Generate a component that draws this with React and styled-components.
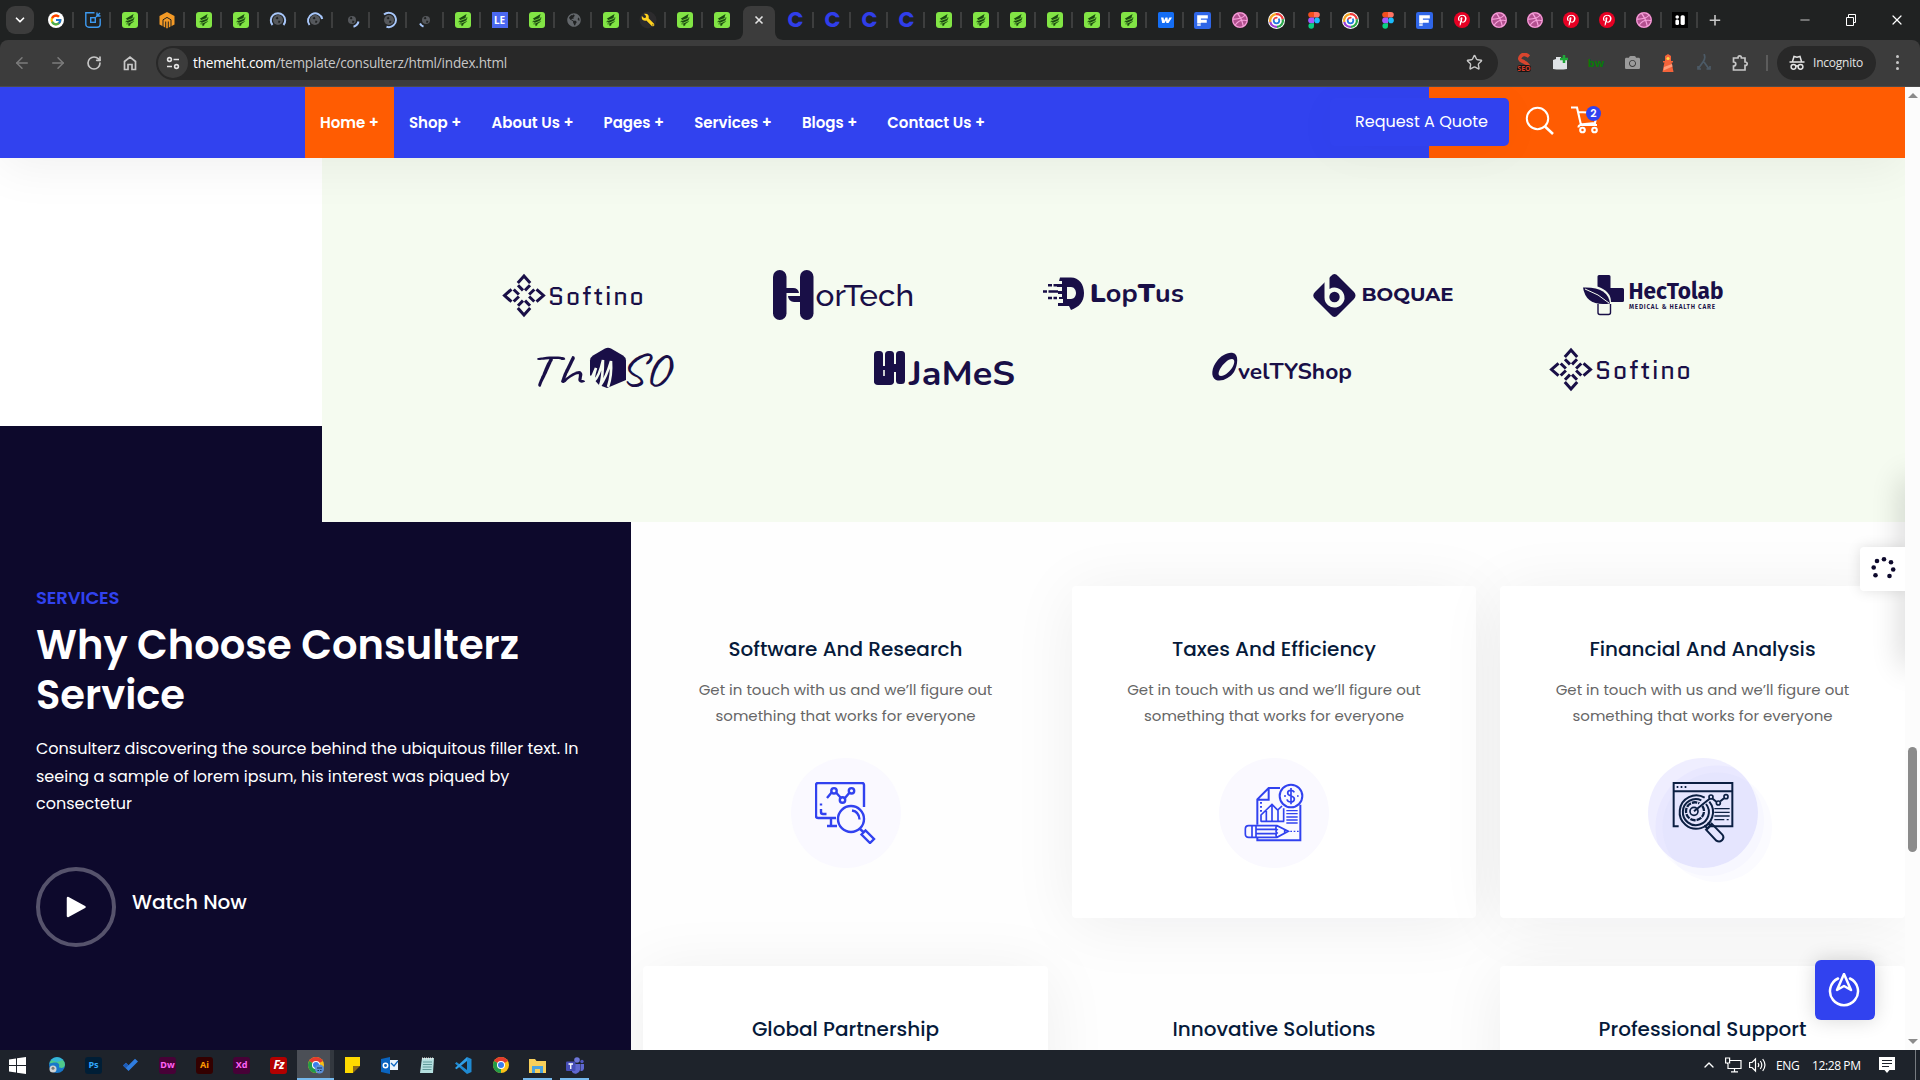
import React from "react";
import styled, { createGlobalStyle, css } from "styled-components";
import { ArrowLeft, ArrowRight, ChevronDown, ChevronUp, Minus, RotateCw, Star, X } from "lucide-react";
import { FcGoogle } from "react-icons/fc";
import { FaDribbble, FaPinterestP, FaGlobeAmericas, FaWrench, FaCamera } from "react-icons/fa";

const BLUE = "#3142ef";
const ORANGE = "#ff5c02";
const NAVY = "#0d092c";
const LOGO = "#190f47";

const Global = createGlobalStyle`
  *, *::before, *::after { box-sizing: border-box; }
  body { margin: 0; overflow: hidden; background: #fff; }
  svg { display: block; flex: none; }
`;

const uiFont = css`font-family: "Open Sans", "Noto Sans", sans-serif;`;
const siteFont = css`
  font-family: Poppins, Inter, "Open Sans", sans-serif;
`;

/* ---------- shell ---------- */
const Screen = styled.div`
  width: 1920px;
  height: 1080px;
  display: flex;
  flex-direction: column;
  overflow: hidden;
`;

/* ---------- tab strip ---------- */
const TabStrip = styled.div`
  height: 40px;
  display: flex;
  align-items: center;
  background: #202222;
  padding-left: 6px;
  flex: none;
`;
const TabSearch = styled.div`
  width: 28px;
  height: 28px;
  border-radius: 9px;
  background: #3c3c3c;
  display: grid;
  place-items: center;
  margin-right: 3px;
`;
const Tab = styled.div`
  width: ${(p) => p.$w}px;
  height: 16px;
  display: flex;
  align-items: center;
  justify-content: center;
  border-right: 2px solid ${(p) => (p.$bare ? "transparent" : "#3d3e3e")};
  padding-left: 2px;
  flex: none;
`;
const ActiveTab = styled.div`
  width: 37px;
  height: 40px;
  flex: none;
  svg { margin-left: -5px; }
`;
const WindowButtons = styled.div`
  margin-left: auto;
  display: flex;
  align-items: center;
  gap: 29.5px;
  padding-right: 15px;
`;
const Letter = styled.span`
  ${siteFont}
  font-weight: 700;
  font-size: 21px;
  line-height: 16px;
  color: #303eea;
`;
const TileText = styled.span`
  width: 16px;
  height: 16px;
  background: #4b68f0;
  color: #fff;
  font: 700 10px/16px "Noto Sans", sans-serif;
  text-align: center;
`;

/* ---------- toolbar ---------- */
const ToolbarBack = styled.div`
  background: #202222;
  flex: none;
`;
const Toolbar = styled.div`
  height: 47px;
  display: flex;
  align-items: center;
  background: #3c3c3c;
  border-radius: 8px 8px 0 0;
  padding: 0 15px 1px 13px;
  border-bottom: 1px solid #4b4b4b;
  color: #c7c7c7;
`;
const NavButtons = styled.div`
  display: flex;
  gap: 18px;
  width: 143px;
`;
const Omnibox = styled.div`
  width: 1342px;
  height: 34px;
  border-radius: 17px;
  background: #282828;
  display: flex;
  align-items: center;
  padding: 0 15px 0 2px;
  color: #c7c7c7;
`;
const SiteInfo = styled.div`
  width: 30px;
  height: 30px;
  border-radius: 50%;
  background: #3c3c3c;
  display: grid;
  place-items: center;
  margin-right: 5px;
`;
const Url = styled.div`
  ${uiFont}
  flex: 1;
  font-size: 13.6px;
  letter-spacing: -0.22px;
  b {
    font-weight: 400;
    color: #fff;
  }
`;
const Extensions = styled.div`
  display: flex;
  align-items: center;
  gap: 18px;
  padding-left: 17px;
`;
const ExtSlot = styled.div`
  width: 18px;
  height: 20px;
  display: grid;
  place-items: center;
`;
const ExtWord = styled.span`
  font: 700 11px/16px "Open Sans", sans-serif;
  color: #087a08;
`;
const Divider = styled.div`
  width: 2px;
  height: 16px;
  background: #5c5c5c;
  margin: 0 9px 0 17px;
`;
const Incognito = styled.div`
  width: 99px;
  height: 34px;
  border-radius: 17px;
  background: #282828;
  display: flex;
  align-items: center;
  gap: 8px;
  padding-left: 12px;
  ${uiFont}
  font-size: 12px;
  letter-spacing: -0.22px;
  color: #e3e3e3;
`;
const Dots = styled.div`
  display: grid;
  gap: 3px;
  margin-left: auto;
  margin-right: 6px;
  i {
    width: 3px;
    height: 3px;
    border-radius: 50%;
    background: #c7c7c7;
  }
`;

/* ---------- web page ---------- */
const Viewport = styled.div`
  height: 963px;
  display: flex;
  flex: none;
`;
const Page = styled.div`
  width: 1905px;
  height: 963px;
  overflow: hidden;
  position: relative;
  background: #fefefe;
  ${siteFont}
`;
const Scrollbar = styled.div`
  width: 15px;
  background: #fcfcfc;
  display: flex;
  flex-direction: column;
  align-items: center;
  padding: 6px 0 6px;
`;
const Arrow = styled.i`
  border: 5px solid transparent;
  border-top-width: ${(p) => (p.$up ? 0 : 5)}px;
  border-bottom-width: ${(p) => (p.$up ? 5 : 0)}px;
  border-${(p) => (p.$up ? "bottom" : "top")}-color: #8b8b8b;
`;
const Thumb = styled.div`
  width: 9px;
  height: 105px;
  border-radius: 5px;
  background: #8b8b8b;
  margin: 649px 0 auto;
`;

const SiteNav = styled.nav`
  height: 71px;
  display: flex;
  background: linear-gradient(90deg, ${BLUE} 1429px, ${ORANGE} 1429px);
  box-shadow: 0 10px 50px rgba(0, 0, 0, 0.06);
  padding-left: 305px;
  position: relative;
  z-index: 2;
`;
const NavItem = styled.div`
  padding: 0 15px;
  line-height: 71px;
  font-size: 15px;
  font-weight: 600;
  white-space: nowrap;
  color: #fff;
  background: ${(p) => (p.$active ? ORANGE : "transparent")};
`;
const NavTools = styled.div`
  width: 279px;
  margin-left: auto;
  margin-right: 296px;
  display: flex;
  align-items: flex-start;
  padding-top: 11px;
`;
const QuoteButton = styled.div`
  width: 179px;
  height: 48px;
  border-radius: 5px;
  background: ${BLUE};
  box-shadow: 0 5px 50px rgba(0, 0, 0, 0.03);
  color: #fff;
  font-size: 16px;
  line-height: 47px;
  padding-left: 25px;
  white-space: nowrap;
`;
const SearchSlot = styled.div`
  padding: 8px 0 0 16px;
`;
const CartSlot = styled.div`
  padding: 7px 0 0 15px;
  position: relative;
`;
const CartCount = styled.div`
  position: absolute;
  top: 8px;
  left: 31px;
  width: 15px;
  height: 15px;
  border-radius: 50%;
  background: ${BLUE};
  color: #fff;
  font-size: 11px;
  font-weight: 600;
  line-height: 15px;
  text-align: center;
`;

const ClientsBand = styled.section`
  height: 364px;
  padding-left: 322px;
  background: linear-gradient(#fff 268px, ${NAVY} 268px);
`;
const ClientsPanel = styled.div`
  height: 364px;
  background: #f5fbf0;
  padding: 100px 116px 0;
`;
const LogoRow = styled.div`
  height: 74px;
  display: flex;
`;
const LogoCell = styled.div`
  flex: 1;
  display: grid;
  place-items: center;
`;

const Services = styled.section`
  display: flex;
  height: 528px;
`;
const Intro = styled.div`
  width: 631px;
  background: ${NAVY};
  color: #fff;
  padding: 62px 36px 0;
  position: relative;
  z-index: 1;
`;
const Eyebrow = styled.div`
  color: ${BLUE};
  font-size: 18px;
  font-weight: 600;
  line-height: 27px;
  letter-spacing: -0.1px;
`;
const Heading = styled.h2`
  margin: 9px 0 15px;
  font-size: 40px;
  font-weight: 600;
  line-height: 50px;
`;
const Lead = styled.p`
  margin: 0;
  font-size: 16px;
  line-height: 27.5px;
`;
const Watch = styled.div`
  margin-top: 49px;
  display: flex;
  align-items: center;
  gap: 16px;
`;
const PlayRing = styled.div`
  width: 80px;
  height: 80px;
  border-radius: 50%;
  border: 4px solid #56536c;
  display: grid;
  place-items: center;
`;
const WatchLabel = styled.div`
  font-size: 20px;
  font-weight: 500;
  line-height: 24px;
  padding-bottom: 9px;
`;

const Cards = styled.div`
  flex: 1;
  padding: 64px 0 0 12px;
  display: grid;
  grid-template-columns: 405px 404px 405px;
  grid-template-rows: 332px 332px;
  gap: 48px 24px;
`;
const Card = styled.article`
  border-radius: 4px;
  display: flex;
  flex-direction: column;
  align-items: center;
  padding: 51px 45px 0;
  position: relative;
  ${(p) => p.$raised && css`
    background: #fff;
    box-shadow: 0 6px 66px rgba(10, 10, 30, 0.065);
  `}
`;
const CardTitle = styled.h3`
  margin: 0 0 16px;
  font-size: 20px;
  font-weight: 500;
  line-height: 24px;
  color: #061a3a;
  white-space: nowrap;
`;
const CardText = styled.p`
  margin: 0;
  font-size: 15px;
  line-height: 26px;
  color: #666;
  text-align: center;
`;
const Disc = styled.div`
  width: 110px;
  height: 110px;
  border-radius: 50%;
  background: #faf9ff;
  margin-top: 29px;
  display: grid;
  place-items: center;
  ${(p) => p.$hot && css`
    background: radial-gradient(circle at 69px 69px, #e5e5fe 54px, #e9e8ff 55px, #e9e8ff 61px, #efeeff 62px);
    box-shadow: 6px 8px 0 0 rgba(79, 75, 255, 0.025), 14px 14px 0 0 rgba(79, 75, 255, 0.025);
  `}
`;

const Loader = styled.div`
  position: absolute;
  right: 0;
  top: 460px;
  width: 45px;
  height: 44px;
  background: #fff;
  border-radius: 4px 0 0 4px;
  box-shadow: 0 0 14px rgba(0, 0, 0, 0.12);
  display: grid;
  place-items: center;
  z-index: 3;
`;
const DrawerEdge = styled.div`
  position: absolute;
  left: 1905px;
  top: 395px;
  width: 20px;
  height: 180px;
  box-shadow: 0 0 30px 4px rgba(0, 0, 0, 0.16);
  z-index: 2;
`;
const ToTop = styled.div`
  position: absolute;
  left: 1815px;
  top: 873px;
  width: 60px;
  height: 60px;
  border-radius: 6px;
  background: ${BLUE};
  box-shadow: 0 0 20px rgba(0, 0, 0, 0.16);
  display: grid;
  place-items: center;
  z-index: 3;
`;

/* ---------- taskbar ---------- */
const Taskbar = styled.div`
  height: 30px;
  background: #1e232b;
  display: flex;
  flex: none;
`;
const Task = styled.div`
  width: 37px;
  height: 30px;
  display: grid;
  place-items: center;
  ${(p) => p.$open && css`
    background: linear-gradient(#76b9ed, #76b9ed) bottom / 29px 2px no-repeat;
  `}
  ${(p) => p.$on && css`
    background: linear-gradient(90deg, #4b4f56 33px, #33383f 33px);
    box-shadow: inset 0 -2px 0 #76b9ed;
  `}
  &:first-child {
    width: 38px;
    padding-right: 3px;
  }
`;
const AppTile = styled.span`
  width: 17px;
  height: 17px;
  border-radius: 3px;
  background: ${(p) => p.$bg};
  color: ${(p) => p.$fg};
  font: ${(p) => (p.$italic ? "italic 700 12px" : "700 9px")}/16px "Noto Sans", sans-serif;
  letter-spacing: ${(p) => (p.$italic ? -1 : 0)}px;
  text-align: center;
`;
const Tray = styled.div`
  margin-left: auto;
  display: flex;
  align-items: center;
  color: #fff;
  ${uiFont}
  font-size: 12px;
  letter-spacing: -0.4px;
`;
const TrayItem = styled.div`
  margin-left: ${(p) => p.$gap}px;
  width: ${(p) => (p.$w ? `${p.$w}px` : "auto")};
  white-space: nowrap;
`;
const DesktopEdge = styled.div`
  width: 5px;
  height: 30px;
  border-left: 1px solid #777b80;
  margin-left: 20px;
`;

/* ---------- favicons ---------- */
const Green = () => (
  <svg width="16" height="16" viewBox="0 0 16 16">
    <rect width="16" height="16" rx="3" fill="#82e545" />
    <path d="M11.600 2L10.400 5.700l2.200-.3L11 9.200l1.300.1-4.500 3.100 1.200.4L6.600 14.200l-.3-2-2.200.1L5.800 10l-2.500.3L5 7.300l-1.300-.5z" fill="#1b4a10" />
    <path d="M4 8.900l7.500-2.700M5.300 11.500l6.200-2.700" stroke="#82e545" strokeWidth=".8" />
  </svg>
);
const Frame = () => (
  <svg width="16" height="16" viewBox="0 0 16 16" fill="none" stroke="#3d9af0" strokeWidth="1.400">
    <path d="M9.500 .8H.8v11.400a3 3 0 0 0 3 3h8.400a3 3 0 0 0 3-3V6.500" /><rect x="5.700" y="5.700" width="4.600" height="4.600" /><path d="M12 .5v3.500h3.500M11 5l4-4" />
  </svg>
);
const Hive = () => (
  <svg width="16" height="17" viewBox="0 0 16 17">
    <path d="M8 0l7.500 4v8.500L8 16.500.5 12.500V4z" fill="#f49a26" />
    <path d="M4 16V7.800L8 5.400l4 2.400V16M6.700 17V9.500M9.300 17V9.500" fill="none" stroke="#202222" strokeWidth="1" />
  </svg>
);
const Globe = ({ size = 13 }) => <FaGlobeAmericas size={size} color="#63676b" />;
const LoadingTab = ({ d, s = 10 }) => (
  <svg width="18" height="18" viewBox="0 0 18 18">
    <circle cx="9" cy="9" r={s / 2} fill="#55585c" />
    <path d="M6.500 7l2-1.200 1 1.700-1.500 1zM9.500 9.500l2 .5-1 2-1.500-.5z" fill="#202222" />
    <path d={d} fill="none" stroke="#a8c7fa" strokeWidth="2" />
  </svg>
);
const Wrench = () => (
  <svg width="18" height="18" viewBox="0 0 18 18">
    <circle cx="9" cy="9" r="8.500" fill="#2c2b2d" />
    <g transform="translate(15.500 2.500) scale(-1 1)"><FaWrench size={13} color="#ffd21e" /></g>
  </svg>
);
const Webflow = () => (
  <svg width="16" height="16" viewBox="0 0 16 16"><rect width="16" height="16" rx="1.500" fill="#146ef5" /><path d="M3 5.500h2.500l.6 3 1.400-3h2l.4 3 1.400-3H14L10.500 11H8.300L8 8.500 6.500 11H4.200z" fill="#fff" /></svg>
);
const BlueF = () => (
  <svg width="17" height="17" viewBox="0 0 16 16"><rect width="16" height="16" rx="2" fill="#2f66e8" /><path d="M3 3h10v3H6.500v1.200H12V10H6.500v.8H3zM3 11.600h3.300V13H3z" fill="#fff" /></svg>
);
const DribbbleIcon = () => (
  <svg width="16" height="16" viewBox="0 0 16 16"><circle cx="8" cy="8" r="8" fill="#b2508f" /><FaDribbble size={16} color="#f6a1da" /></svg>
);
const Rings = () => (
  <svg width="17" height="17" viewBox="0 0 17 17" fill="none">
    <circle cx="8.500" cy="8.500" r="8.500" fill="#fff" />
    <g strokeWidth="2.300">
      <path d="M2.300 10A6.400 6.400 0 0 1 8 2.200" stroke="#f5a623" /><path d="M8 2.200a6.400 6.400 0 0 1 6.800 5" stroke="#ef3b3b" /><path d="M14.800 7.200A6.400 6.400 0 0 1 9 14.900" stroke="#2aa84a" /><path d="M9 14.900A6.400 6.400 0 0 1 2.300 10" stroke="#9b3fd8" />
      <circle cx="8.500" cy="8.500" r="2.800" stroke="#2277dd" strokeWidth="1.800" strokeDasharray="10 5" /><path d="M5.900 7.500a2.800 2.800 0 0 1 3.500-1.700" stroke="#ef3b3b" strokeWidth="1.800" />
    </g>
  </svg>
);
const Figma = () => (
  <svg width="12" height="17" viewBox="0 0 12 17">
    <path d="M6 0H3a2.800 2.800 0 0 0 0 5.600h3z" fill="#f24e1e" /><path d="M6 0h3a2.800 2.800 0 0 1 0 5.600H6z" fill="#ff7262" />
    <path d="M6 5.600H3a2.800 2.800 0 0 0 0 5.600h3z" fill="#a259ff" /><circle cx="9" cy="8.400" r="2.800" fill="#1abcfe" />
    <path d="M3 11.200h3V14a2.800 2.800 0 1 1-3-2.800z" fill="#0acf83" />
  </svg>
);
const Pin = () => (
  <svg width="16" height="16" viewBox="0 0 16 16"><circle cx="8" cy="8" r="8" fill="#e60023" /><g transform="translate(2.500 2.500)"><FaPinterestP size={11.500} color="#fff" /></g></svg>
);
const BlackTile = () => (
  <svg width="16" height="16" viewBox="0 0 16 16"><rect width="16" height="16" fill="#000" /><g fill="#fff"><circle cx="5.200" cy="5" r="1.800" /><rect x="3.400" y="7.600" width="3.600" height="5.400" rx="1.500" /><rect x="8.600" y="3.200" width="4.200" height="9.800" rx="1.600" /></g></svg>
);
const GoogleIcon = () => (
  <svg width="16" height="16" viewBox="0 0 16 16"><circle cx="8" cy="8" r="8" fill="#fff" /><g transform="translate(1.500 1.500)"><FcGoogle size={13} /></g></svg>
);
const C = () => <Letter>C</Letter>;
const LE = () => <TileText>LE</TileText>;

const arcs = [
  "M3.500 14a7.200 7.200 0 1 1 11 0",
  "M3.500 14A7.200 7.200 0 1 1 16.200 8",
  "M15.500 10.500a7 7 0 0 1-5 5.200",
  "M4 3.500a7.200 7.200 0 1 1 2.500 12.300",
  "M3 12.500a7 7 0 0 0 3.500 3.200",
];
const tabs = [
  [GoogleIcon], [Frame], [Green], [Hive], [Green], [Green],
  [LoadingTab, { d: arcs[0] }], [LoadingTab, { d: arcs[1] }], [LoadingTab, { d: arcs[2], s: 8 }],
  [LoadingTab, { d: arcs[3] }], [LoadingTab, { d: arcs[4], s: 8 }],
  [Green], [LE], [Green], [Globe, { size: 14 }], [Green], [Wrench], [Green], [Green],
  null,
  [C], [C], [C], [C], [Green], [Green], [Green], [Green], [Green], [Green],
  [Webflow], [BlueF], [DribbbleIcon], [Rings], [Figma], [Rings], [Figma], [BlueF], [Pin],
  [DribbbleIcon], [DribbbleIcon], [Pin], [Pin], [DribbbleIcon], [BlackTile],
];

/* ---------- client logos ---------- */
const LogoText = styled.text`
  fill: ${LOGO};
  font-family: ${(p) => p.$font || "Inter"}, "Open Sans", sans-serif;
  font-size: ${(p) => p.$size}px;
  font-weight: ${(p) => p.$weight || 400};
`;
const LogoSvg = ({ children }) => (
  <svg width="141" height="50" viewBox="0 0 141 50" overflow="visible" fill={LOGO}>{children}</svg>
);
const Softino = () => (
  <LogoSvg>
    {[0, 90, 180, 270].map((a) => (
      <g key={a} transform={`rotate(${a} 21 25.500)`} fill="none" stroke={LOGO} strokeWidth="3">
        <path d="M14.800 13 21 6l6.200 7M15 15.200l5 5.200M27 15.200l-5 5.200" />
      </g>
    ))}
    <LogoText $font="Quantico" $size={25} x="45" y="35" textLength="96">Softino</LogoText>
  </LogoSvg>
);
const HorTech = () => (
  <LogoSvg>
    <rect width="13.500" height="50" rx="6.700" /><rect x="27" width="13.500" height="50" rx="6.700" />
    <path d="M13 18h7a6 6 0 0 1 6 5H13zM28 32h-7a6 6 0 0 1-6-6h13z" />
    <LogoText $font="Raleway" $size={30.500} $weight={500} x="42.500" y="36" textLength="98.500" lengthAdjust="spacingAndGlyphs">orTech</LogoText>
  </LogoSvg>
);
const LopTus = () => (
  <LogoSvg>
    <path fillRule="evenodd" d="M17 7.500h11c8 0 13 7 13 15.500 0 9-5 14-13 17l-2-4H15v-3h5v-4h-4v-2h3v-3h-4v-3h4v-4h-5v-3h5v-3h-3zM24 17v12h4c3 0 5-3 5-6s-2-6-5-6z" />
    <path d="M0 21.500h15M5 15.300h9M5 28h9" stroke={LOGO} strokeWidth="2.400" strokeDasharray="4 1.500 12" />
    <LogoText $font="Nunito" $size={25} $weight={700} x="47" y="31.500" textLength="94" lengthAdjust="spacingAndGlyphs"><tspan fontWeight="900">L</tspan>op<tspan fontWeight="900">T</tspan>us</LogoText>
  </LogoSvg>
);
const Boquae = () => (
  <LogoSvg>
    <path d="M18 6q3.500-4 7 0l16 16q3 3.500 0 7L25 45q-3.500 4-7 0L2 29q-3.500-3.500 0-7z" />
    <path d="M11.500 8v19.500a10 10 0 1 0 5-8.600V4z" fill="#f5fbf0" /><circle cx="21.500" cy="27" r="5.200" />
    <LogoText $font="Montserrat" $size={18.500} $weight={700} x="48.500" y="31" textLength="92" lengthAdjust="spacingAndGlyphs">BOQUAE</LogoText>
  </LogoSvg>
);
const HecTolab = () => (
  <LogoSvg>
    <path d="M16 5h10q1.500 0 1.500 1.500V18h12q1.500 0 1.500 1.500v11q0 1.500-1.500 1.500H28q0-11-13.500-15.500v-10Q14.500 5 16 5z" />
    <path d="M0 17.500q25-1 27 16Q3 37 0 17.500z" /><path d="M2 19q14 5 24 14" stroke="#f5fbf0" fill="none" />
    <path d="M15 34v8.500q0 2 2 2h8.500q2 0 2-2V34" fill="none" stroke={LOGO} strokeWidth="1.400" />
    <LogoText $font="'Fira Sans', 'Noto Sans'" $size={24} $weight={700} x="45.500" y="28.500" textLength="95" lengthAdjust="spacingAndGlyphs">HecTolab</LogoText>
    <LogoText $font="'Fira Sans', 'Noto Sans'" $size={6.400} $weight={600} x="46" y="39" textLength="86">MEDICAL &amp; HEALTH CARE</LogoText>
  </LogoSvg>
);
const Thmso = () => (
  <LogoSvg>
    <path d="M69 4.500q3-1.500 6 0l12 7q3 2 3 5V36l-19 8-8-3-9-10V16.500q0-3 3-5z" />
    <LogoText $font="Caveat" $size={46} $weight={400} x="-9" y="41" textLength="56" lengthAdjust="spacingAndGlyphs">Th</LogoText>
    <path d="M48 41q6-1 12-17-3 10-2 13 5-4 9-21 0 18-3 26M64 42Q70 34 75 17q1 14-3 26" fill="none" stroke="#f5fbf0" strokeWidth="2.600" />
    <LogoText $font="Caveat" $size={46} $weight={400} x="84" y="41" textLength="49" lengthAdjust="spacingAndGlyphs">SO</LogoText>
  </LogoSvg>
);
const James = () => (
  <LogoSvg>
    <rect y="7" width="9" height="33" rx="3.500" /><rect x="11" y="7" width="9" height="33" rx="3.500" /><rect x="22" y="7" width="9" height="33" rx="3.500" />
    <rect y="22" width="20" height="19" rx="4" /><rect x="14" y="20" width="14" height="8" />
    <path d="M10 26v6M10 9v9M21 9v8M21 31v8" stroke="#f5fbf0" strokeWidth="1.600" />
    <LogoText $font="Nunito" $size={33} $weight={700} x="35" y="40.500" textLength="106" lengthAdjust="spacingAndGlyphs">JaMeS</LogoText>
  </LogoSvg>
);
const Oveltyshop = () => (
  <LogoSvg>
    <path fillRule="evenodd" d="M21 9c6 1 5 12 1 19-4 6-12 10-18 8-6-3-4-13 1-19C9 12 15 8 21 9zM20 15c-4 0-9 5-12 10-2 4-2 7 1 7 4 0 8-4 11-8 3-5 3-9 0-9z" />
    <LogoText $font="Nunito" $size={22} $weight={700} x="26" y="35" textLength="114" lengthAdjust="spacingAndGlyphs">velTYShop</LogoText>
  </LogoSvg>
);

/* ---------- service icons ---------- */
const MonitorSearch = () => (
  <svg width="62" height="62" viewBox="1 1 62 62" fill="none" stroke={BLUE} strokeWidth="2.400">
    <path d="M50 26V4q0-2-2-2H4Q2 2 2 4v31q0 2 2 2h18M17 37.500v7M13 45h10" />
    <path d="M7 22.500v2M7 28v3q0 2 2 2h3.500M13 17l5-6M22 11.500l5 5.500M31 17l5-6" />
    <circle cx="20" cy="9.800" r="2.700" /><circle cx="28.500" cy="19" r="2.700" /><circle cx="37.500" cy="9.800" r="2.700" />
    <circle cx="37" cy="38" r="13" /><path d="M38 29.500q7 1 7.500 9M46 48l4 3.500M47.500 53.500l4-4L60 58l-4 4z" />
  </svg>
);
const ReportPencil = () => (
  <svg width="80" height="72" viewBox="-6 3 240 216" fill="none" stroke={BLUE} strokeWidth="6">
    <path d="M64 146V70l34-34h34M64 71h34V37M193 86v107H64v-8" />
    <circle cx="165" cy="60" r="34" /><path d="M175 49q-3-7-11-6-9 1-9 8 0 6 10 9 11 3 10 10-1 8-11 8-9 0-11-8M165 36v49M144 60h6M183 60h5" strokeWidth="5" />
    <path d="M75 78v32" strokeDasharray="5 7" /><path d="M75 137v-20l33-32 17 17 13-12M75 136h70M91 135v-30M108 135V87M126 135v-32M143 135V97" strokeWidth="5" />
    <path d="M151 104h34M151 113h34M151 123h34M151 132h34M151 141h34" strokeWidth="4" />
    <path d="M38 149h85l34 17-34 18H38q-10 0-10-10v-15q0-10 10-10zM48 149v35M60 149v35M60 160h60M60 173h60M123 149q-7 8 0 12-6 5 0 10-6 5 0 13M146 161v10" strokeWidth="5" />
    <path d="M163 166h25" strokeDasharray="5 5" strokeWidth="4" />
  </svg>
);
const BrowserTarget = () => (
  <svg width="84" height="78" viewBox="3 12 252 234" fill="none" stroke="#0b1f42" strokeWidth="6">
    <path d="M56 169H41V39h176v130h-66M41 64h176" /><path d="M50 51h30" strokeDasharray="5 7" />
    <path d="M148 95a50 50 0 1 1-14-12" /><path d="M138 102a39 39 0 1 1-14-11" /><path d="M127 108a27 27 0 1 1-9-8" strokeWidth="7" strokeDasharray="16 3" /><circle cx="102" cy="124" r="12" strokeWidth="5" />
    <path d="M102 124l47-38M158 86l11 9M181 94l11-9" /><circle cx="153" cy="81" r="6" strokeWidth="5" /><circle cx="175" cy="99" r="6" strokeWidth="5" /><circle cx="198" cy="80" r="6" strokeWidth="5" />
    <path d="M163 116h46M163 127h46M163 138h46M163 149h30M200 149h6" strokeWidth="4" />
    <path d="M133 166l10 10 9-9-9-9M138 179l31 33q9 6 17-1 8-9 1-17l-32-33z" />
  </svg>
);

const nav = ["Home +", "Shop +", "About Us +", "Pages +", "Services +", "Blogs +", "Contact Us +"];
const blurb = "Get in touch with us and we’ll figure out something that works for everyone";
const cards = [
  { title: "Software And Research", Icon: MonitorSearch },
  { title: "Taxes And Efficiency", Icon: ReportPencil, raised: true },
  { title: "Financial And Analysis", Icon: BrowserTarget, raised: true, hot: true },
  { title: "Global Partnership", raised: true },
  { title: "Innovative Solutions" },
  { title: "Professional Support", raised: true },
];
const loaderDots = [[14, 3.200], [21, 6.200], [23.200, 13.500], [19.500, 20], [7, 5], [3.700, 11.500], [5.500, 19.200]];

/* ---------- taskbar icons ---------- */
const Chrome = ({ badge }) => (
  <svg width="18" height="18" viewBox="0 0 18 18">
    <circle cx="9" cy="9" r="8" fill="#fbc116" /><path d="M9 9L2.100 5A8 8 0 0 1 15.900 5z" fill="#e33b2e" /><path d="M9 9v8A8 8 0 0 1 2.100 5z" fill="#229b48" />
    <circle cx="9" cy="9" r="4" fill="#fff" /><circle cx="9" cy="9" r="3" fill="#3b7ded" />
    {badge && <g><circle cx="12.500" cy="13" r="4.500" fill="#5a8fd6" /><path d="M10 12h5M10.500 14.500h1.500M13 14.500h1.500" stroke="#18335c" /></g>}
  </svg>
);
const tasks = [
  { icon: <svg width="17" height="17" viewBox="0 0 17 17" fill="#fff"><path d="M0 2.500l7-1V8H0zM8 1.300L17 0v8H8zM0 9h7v6.500l-7-1zM8 9h9v8l-9-1.300z" /></svg> },
  { icon: <svg width="18" height="18" viewBox="0 0 18 18"><circle cx="9" cy="9" r="8" fill="#1877c9" /><path d="M1.200 8A8 8 0 0 1 17 8.500c0 4-5 4-6 2.500 1-3-1-4.500-3.500-4.500S2.500 7 1.200 8z" fill="#4fc98a" /><path d="M3 4A8 8 0 0 1 15 4L9 6z" fill="#35b6d8" /><circle cx="5" cy="13" r="3.500" fill="#cfd3d6" /><circle cx="5" cy="12.300" r="1.500" fill="#777" /></svg> },
  { icon: <AppTile $bg="#001e36" $fg="#31a8ff">Ps</AppTile> },
  { icon: <svg width="17" height="14" viewBox="0 0 17 14"><path d="M1 7.500L6.500 13 16 3.500 13 .8 6.500 7.300 4 4.800z" fill="#2f7de0" /><path d="M1 7.500l3-2.700 2.500 2.500-2.700 2.900z" fill="#1d5bb8" /></svg> },
  { icon: <AppTile $bg="#470137" $fg="#ff61f6">Dw</AppTile> },
  { icon: <AppTile $bg="#330000" $fg="#ff9a00">Ai</AppTile> },
  { icon: <AppTile $bg="#470137" $fg="#ff61f6">Xd</AppTile> },
  { icon: <AppTile $bg="#b30000" $fg="#fff" $italic>Fz</AppTile> },
  { icon: <Chrome badge />, on: true },
  { icon: <svg width="15" height="16" viewBox="0 0 15 16"><path d="M0 0h15v9H8v7H0z" fill="#ffda00" /><path d="M8 16V9h7z" fill="#8a6a17" /></svg> },
  { icon: <svg width="17" height="17" viewBox="0 0 17 17"><path d="M8 3h9v10H8z" fill="#e8f2fb" /><path d="M10 6l3 3 4-5" fill="none" stroke="#0a64c0" strokeWidth="1.300" /><path d="M0 2l9-2v17l-9-2z" fill="#0a64c0" /><circle cx="4.500" cy="8.500" r="2.200" fill="none" stroke="#fff" strokeWidth="1.500" /></svg> },
  { icon: <svg width="16" height="17" viewBox="0 0 16 17"><path d="M3 1h12l-1 15H1z" fill="#b5e0e0" /><path d="M4 5h9M4 7.500h9M3.700 10h9M3.500 12.500h9" stroke="#5f9a9a" /><path d="M3 1.500h12" stroke="#e8e8e8" strokeWidth="2" strokeDasharray="1 1" /></svg> },
  { icon: <svg width="17" height="17" viewBox="0 0 17 17"><path d="M12 0l4.500 2v13L12 17 0 6.500 1.500 5 12 13z" fill="#1f8ad2" /><path d="M12 0v4L1.500 12.300 0 11z" fill="#2f9fe8" /></svg> },
  { icon: <Chrome /> },
  { icon: <svg width="17" height="15" viewBox="0 0 17 15"><path d="M0 1h6l1.500 2H17v12H0z" fill="#f7cf5a" /><path d="M3 8h11v7h-3v-4H6v4H3z" fill="#4aa3e0" /></svg>, open: true },
  { icon: <svg width="18" height="17" viewBox="0 0 18 17"><circle cx="11" cy="3" r="2.800" fill="#6d76d8" /><circle cx="16" cy="4.500" r="1.700" fill="#5058c0" /><path d="M6 7h8v6a4.500 4.500 0 0 1-8 2zM14.500 7H18v4.500a3 3 0 0 1-3.500 2.500z" fill="#5f68d0" /><rect y="4.500" width="9.500" height="9.500" rx="1" fill="#464eb8" /><path d="M2.500 7h4.500M4.750 7v5" stroke="#fff" strokeWidth="1.300" /></svg>, open: true },
];

export default function App() {
  return (
    <Screen>
      <Global />
      <TabStrip>
        <TabSearch><ChevronDown size={14} color="#fff" strokeWidth={3} /></TabSearch>
        {tabs.map((t, i) => {
          if (!t) {
            return (
              <ActiveTab key={i}>
                <svg width="52" height="40" viewBox="0 0 52 40" overflow="visible">
                  <path d="M-2 40h2q8-1 8-8V14q0-8 8-8h16q8 0 8 8v18q0 7 8 8z" fill="#3c3c3c" />
                  <path d="M20.500 16.500l7 7m0-7l-7 7" stroke="#e3e3e3" strokeWidth="1.600" />
                </svg>
              </ActiveTab>
            );
          }
          const [Icon, props] = t;
          return <Tab key={i} $w={i > 39 ? 36.200 : 37} $bare={i === 18}><Icon {...props} /></Tab>;
        })}
        <svg width="34" height="16" viewBox="0 0 34 16"><path d="M17 3v10.500M11.700 8.200h10.500" stroke="#c7c7c7" strokeWidth="1.600" /></svg>
        <WindowButtons>
          <Minus size={14} color="#8d8f8f" strokeWidth={2.500} />
          <svg width="18" height="16" viewBox="0 0 18 16" fill="none" stroke="#fff"><path d="M4.500 5.500h7v8h-7zM6.500 5.500v-3h7v8h-2" /></svg>
          <X size={16} color="#fff" strokeWidth={1.800} />
        </WindowButtons>
      </TabStrip>

      <ToolbarBack>
        <Toolbar>
          <NavButtons>
            <ArrowLeft size={18} color="#7c7c7c" /><ArrowRight size={18} color="#7c7c7c" />
            <RotateCw size={18} viewBox="-1.500 -1.500 27 27" strokeWidth={2.500} />
            <svg width="18" height="18" viewBox="0 0 18 18" fill="none" stroke="#c7c7c7" strokeWidth="1.700"><path d="M3.500 7.500L9 3l5.500 4.500V15.500H11V10.500H7v5H3.500z" /></svg>
          </NavButtons>
          <Omnibox>
            <SiteInfo>
              <svg width="14" height="14" viewBox="0 0 14 14" fill="none" stroke="#e3e3e3" strokeWidth="1.600"><circle cx="3.500" cy="3.500" r="1.900" /><path d="M7.500 3.500H13M1 10.500h5" /><circle cx="10.500" cy="10.500" r="1.900" /></svg>
            </SiteInfo>
            <Url><b>themeht.com</b>/template/consulterz/html/index.html</Url>
            <Star size={17} strokeWidth={2} />
          </Omnibox>
          <Extensions>
            <ExtSlot><svg width="16" height="20" viewBox="0 0 16 20"><path d="M13 3.500Q8-.5 5 3t1 5 6 4q1 3-4 3-4 0-6-2" fill="none" stroke="#d8452e" strokeWidth="3.500" /><rect x="1" y="12" width="14" height="7" rx="3" fill="#151515" /><text x="8" y="18" fontSize="7" fontWeight="700" fontFamily="Noto Sans" fill="#d33a26" textAnchor="middle">SEO</text></svg></ExtSlot>
            <ExtSlot><svg width="17" height="17" viewBox="0 0 17 17"><path d="M1 6l3-1V3h5v3h6v9q-7 1-14 0z" fill="#dfe3e6" /><path d="M12 1v8M8 5h8" stroke="#1fa838" strokeWidth="2.500" /></svg></ExtSlot>
            <ExtSlot><ExtWord>bw</ExtWord></ExtSlot>
            <ExtSlot><FaCamera size={15} color="#9b9b9b" /></ExtSlot>
            <ExtSlot><svg width="14" height="18" viewBox="0 0 14 18"><path d="M4 2l3-2 3 2v5H4zM2 7h10v1.500H2zM3.500 8h7L12.500 18h-11z" fill="#f4633a" /><path d="M3 13l8-3 .5 2.500-9 4z" fill="#ff9c7a" /><circle cx="7" cy="4.500" r="1.600" fill="#ffd84a" /></svg></ExtSlot>
            <ExtSlot><svg width="14" height="17" viewBox="0 0 14 17" fill="none" stroke="#4c5a66" strokeWidth="1.700"><path d="M7 0q2 4-1 8l-5 7M7 8l5 7M1 12v3h3M9.500 15H13v-3" /></svg></ExtSlot>
            <ExtSlot><svg width="18" height="18" viewBox="0 0 18 18" fill="none" stroke="#c7c7c7" strokeWidth="1.700"><path d="M2.500 4h4.500q0-2.200 1.700-2.200T10.400 4H14v4q2.200 0 2.200 1.700T14 11.400V16H2.500v-4q2.300 0 2.300-2T2.500 8z" /></svg></ExtSlot>
          </Extensions>
          <Divider />
          <Incognito>
            <svg width="16" height="16" viewBox="0 0 16 16" fill="none" stroke="#e3e3e3" strokeWidth="1.500"><path d="M.5 7h15M3.500 6.500L5 1.500l3 .8 3-.8 1.500 5" /><circle cx="4.500" cy="11.800" r="2.400" /><circle cx="11.500" cy="11.800" r="2.400" /><path d="M6.500 11.300q1.500-1 3 0" /></svg>
            Incognito
          </Incognito>
          <Dots><i /><i /><i /></Dots>
        </Toolbar>
      </ToolbarBack>

      <Viewport>
        <Page>
          <SiteNav>
            {nav.map((label, i) => <NavItem key={label} $active={i === 0}>{label}</NavItem>)}
            <NavTools>
              <QuoteButton>Request A Quote</QuoteButton>
              <SearchSlot><svg width="30" height="30" viewBox="0 0 30 30" fill="none" stroke="#fff" strokeWidth="2"><circle cx="12.500" cy="12.500" r="10.700" /><path d="M20 20.500l8 7.500" strokeWidth="2.600" /></svg></SearchSlot>
              <CartSlot>
                <svg width="30" height="30" viewBox="0 0 30 30" fill="none" stroke="#fff" strokeWidth="2.100"><path d="M1 2.500h6L11 20h16M8 7l19 1-2 10-15 1.500M11 20q-2.500 0-2.500 2.500" /><circle cx="12.500" cy="25" r="2.300" /><circle cx="24.500" cy="25" r="2.300" /></svg>
                <CartCount>2</CartCount>
              </CartSlot>
            </NavTools>
          </SiteNav>

          <ClientsBand>
            <ClientsPanel>
              <LogoRow>
                {[Softino, HorTech, LopTus, Boquae, HecTolab].map((L, i) => <LogoCell key={i}><L /></LogoCell>)}
              </LogoRow>
              <LogoRow>
                {[Thmso, James, Oveltyshop, Softino].map((L, i) => <LogoCell key={i}><L /></LogoCell>)}
              </LogoRow>
            </ClientsPanel>
          </ClientsBand>

          <Services>
            <Intro>
              <Eyebrow>SERVICES</Eyebrow>
              <Heading>Why Choose Consulterz Service</Heading>
              <Lead>
                Consulterz discovering the source behind the ubiquitous filler text. In
                seeing a sample of lorem ipsum, his interest was piqued by consectetur
              </Lead>
              <Watch>
                <PlayRing><svg width="20" height="22" viewBox="0 0 20 22"><path d="M2 2l16.500 9L2 20z" fill="#fff" stroke="#fff" strokeWidth="2.500" strokeLinejoin="round" /></svg></PlayRing>
                <WatchLabel>Watch Now</WatchLabel>
              </Watch>
            </Intro>
            <Cards>
              {cards.map(({ title, Icon, raised, hot }) => (
                <Card key={title} $raised={raised}>
                  <CardTitle>{title}</CardTitle>
                  {Icon && <CardText>{blurb}</CardText>}
                  {Icon && <Disc $hot={hot}><Icon /></Disc>}
                </Card>
              ))}
            </Cards>
          </Services>

          <DrawerEdge />
          <Loader>
            <svg width="26" height="26" viewBox="0 0 26 26" fill={NAVY}>
              {loaderDots.map(([x, y]) => <circle key={x} cx={x} cy={y} r="2.300" />)}
            </svg>
          </Loader>
          <ToTop>
            <svg width="34" height="34" viewBox="1 0 34 34" fill="none" stroke="#fff" strokeWidth="2.500" strokeLinejoin="round" strokeLinecap="round">
              <path d="M11 5.500a14 14 0 1 0 12 0" /><path d="M17 1l7 16-7-4-7 4z" />
            </svg>
          </ToTop>
        </Page>
        <Scrollbar><Arrow $up /><Thumb /><Arrow /></Scrollbar>
      </Viewport>

      <Taskbar>
        {tasks.map((t, i) => <Task key={i} $on={t.on} $open={t.open}>{t.icon}</Task>)}
        <Tray>
          <ChevronUp size={16} strokeWidth={2} />
          <TrayItem $gap={8}><svg width="17" height="16" viewBox="0 0 17 16" fill="none" stroke="#fff" strokeWidth="1.200"><path d="M5 3.500h11v8H3V7M9.500 11.500v3M6 14.800h7M.6 1h4v5h-4zM2.600 6v1" /></svg></TrayItem>
          <TrayItem $gap={7}><svg width="17" height="16" viewBox="0 0 17 16" fill="none" stroke="#fff" strokeWidth="1.200"><path d="M.6 5.500H3l3.500-3.500v12L3 10.500H.6zM9 6q1.500 2 0 4M11.300 4q3 4 0 8M13.700 2q4.500 6 0 12" /></svg></TrayItem>
          <TrayItem $gap={10} $w={23}>ENG</TrayItem>
          <TrayItem $gap={13} $w={48.500}>12:28 PM</TrayItem>
          <TrayItem $gap={18.500}><svg width="16" height="16" viewBox="0 0 16 16"><path d="M0 0h16v13h-5.500L8 16l-2.500-3H0z" fill="#fff" /><path d="M3 3.500h10M3 6.500h10M3 9.500h7" stroke="#1e232b" strokeWidth="1.200" /></svg></TrayItem>
          <DesktopEdge />
        </Tray>
      </Taskbar>
    </Screen>
  );
}
